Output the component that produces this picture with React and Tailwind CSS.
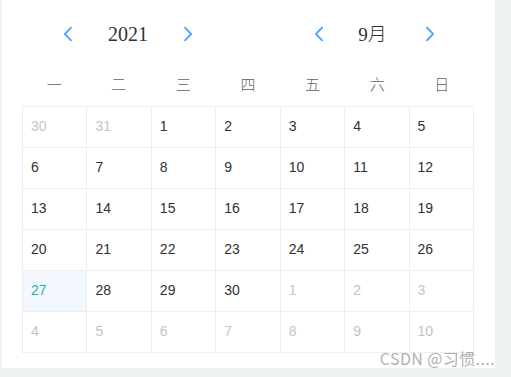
import React from 'react';

const weekDays = ['一', '二', '三', '四', '五', '六', '日'];

// 2021年9月，周一开头
const buildDays = () => {
  const days = [];
  days.push({ n: 30, other: true }, { n: 31, other: true });
  for (let i = 1; i <= 30; i++) days.push({ n: i, today: i === 27 });
  for (let i = 1; i <= 10; i++) days.push({ n: i, other: true });
  return days;
};

const Chevron = ({ dir }) => (
  <svg width="10" height="16" viewBox="0 0 10 16" className="shrink-0">
    <path
      d={dir === 'left' ? 'M8.5 1.2 L2 8 L8.5 14.8' : 'M1.5 1.2 L8 8 L1.5 14.8'}
      fill="none"
      stroke="#409eff"
      strokeWidth="1.8"
    />
  </svg>
);

const App = () => {
  const days = buildDays();

  return (
    <div className="w-[511px] h-[377px] bg-[#eff2f3] pl-[2px] overflow-hidden">
      <div className="relative w-[493px] h-[368px] bg-white pl-[20px] pr-[21px]">
        {/* 年份 / 月份切换 */}
        <div
          className="h-[68px] flex items-center pl-[41px] text-[20px] text-[#303133]"
          style={{ fontFamily: '"Liberation Serif", "Noto Sans CJK SC", serif' }}
        >
          <Chevron dir="left" />
          <div className="w-[110px] text-center leading-none">2021</div>
          <Chevron dir="right" />
          <div className="w-[121px]" />
          <Chevron dir="left" />
          <div className="w-[101px] pr-[4px] text-center leading-none text-[19px] font-light">9月</div>
          <Chevron dir="right" />
        </div>

        {/* 星期 */}
        <div
          className="h-[32px] mb-[6px] grid grid-cols-7 items-center text-[15px] text-[#606266]"
          style={{ fontFamily: '"Noto Sans CJK SC", sans-serif' }}
        >
          {weekDays.map((d) => (
            <div key={d} className="text-center font-light">
              {d}
            </div>
          ))}
        </div>

        {/* 日期格子 */}
        <div
          className="grid grid-cols-7 border-l border-t border-[#ebeef5]"
          style={{ fontFamily: '"Liberation Sans", Arial, sans-serif' }}
        >
          {days.map((d, i) => (
            <div
              key={i}
              className={
                'h-[41px] border-r border-b border-[#ebeef5] pl-[8px] pt-[9px] text-[14px] leading-[20px] ' +
                (d.today
                  ? 'bg-[#f2f8fe] text-[#19b4a4]'
                  : d.other
                  ? 'text-[#c0c4cc]'
                  : 'text-[#303133]')
              }
            >
              {d.n}
            </div>
          ))}
        </div>

        <div
          className="absolute right-0 bottom-0 text-[16px] leading-[20px] text-[#9a9a9a]/80 tracking-[0.4px]"
          style={{ fontFamily: '"Noto Sans CJK SC", sans-serif' }}
        >
          CSDN @习惯....
        </div>
      </div>
    </div>
  );
};

export default App;
